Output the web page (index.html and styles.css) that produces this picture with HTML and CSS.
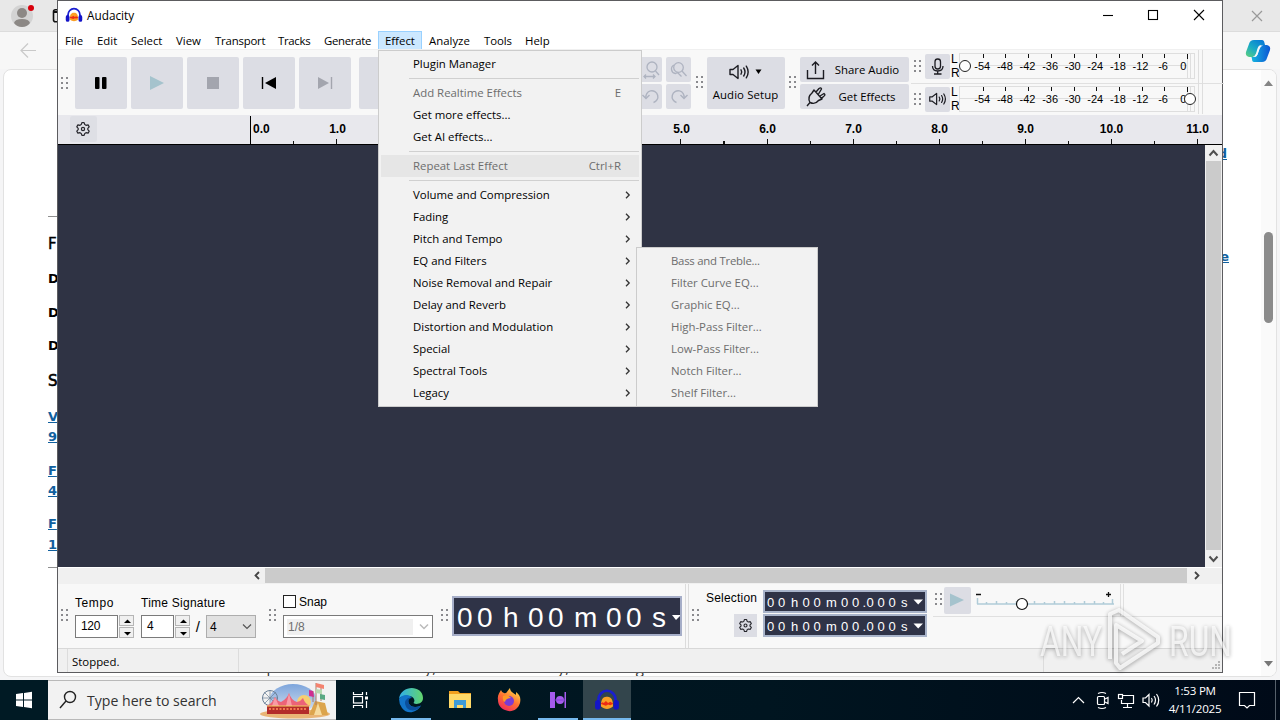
FILE: index.html
```html
<!DOCTYPE html>
<html lang="en">
<head>
<meta charset="utf-8">
<title>Audacity</title>
<link rel="stylesheet" href="styles.css">
</head>
<body>
<svg class="defs" width="0" height="0">
  <symbol id="grip" viewBox="0 0 8 14"><g fill="#8a8a8e"><rect x="0" y="1" width="2" height="2"/><rect x="5" y="1" width="2" height="2"/><rect x="0" y="6" width="2" height="2"/><rect x="5" y="6" width="2" height="2"/><rect x="0" y="11" width="2" height="2"/><rect x="5" y="11" width="2" height="2"/></g></symbol>
  <symbol id="gear" viewBox="0 0 16 16"><g fill="none" stroke="#26262c" stroke-width="1.2" stroke-linejoin="round"><path d="M6.2 3.6 L6.9 1.6 H9.1 L9.8 3.6 L11 4.3 L13.1 3.9 L14.2 5.9 L12.8 7.4 V8.6 L14.2 10.1 L13.1 12.1 L11 11.7 L9.8 12.4 L9.1 14.4 H6.9 L6.2 12.4 L5 11.7 L2.9 12.1 L1.8 10.1 L3.2 8.6 V7.4 L1.8 5.9 L2.9 3.9 L5 4.3 Z"/><circle cx="8" cy="8" r="1.6"/></g></symbol>
  <symbol id="speaker" viewBox="0 0 22 18"><g fill="none" stroke="#1c1c22" stroke-width="1.4" stroke-linecap="round" stroke-linejoin="round"><path d="M2 6.5 H5 L10 2.5 V15.5 L5 11.5 H2 Z"/><path d="M13 6.8 Q14.5 9 13 11.2"/><path d="M15.7 5 Q18.3 9 15.7 13"/><path d="M18.3 3.2 Q22 9 18.3 14.8"/></g></symbol>
  <symbol id="chev" viewBox="0 0 8 10"><path d="M2 1.8 L5.2 5 L2 8.2" fill="none" stroke="#333" stroke-width="1.3"/></symbol>
  <symbol id="phones" viewBox="0 0 24 24"><path d="M4 16 V12 A8 8.500 0 0 1 20 12 V16" fill="none" stroke="#1a1fd0" stroke-width="2.400"/><path d="M6.500 18 C6 11 9 8.500 12 9 C15.500 8.500 18 12 17.500 18 C14 21 10 21 6.500 18Z" fill="#fba026"/><path d="M6 15.500 L8 14 L9 14.800 L11 13 L13 14.800 L15 13.500 L18 15.500 L15 16.800 L13 16.200 L11 17.200 L9 16.500Z" fill="#ee2a14"/><rect x="1" y="12" width="5" height="9" rx="2.500" fill="#1414c8"/><rect x="18" y="12" width="5" height="9" rx="2.500" fill="#1414c8"/></symbol>
</svg>

<div class="screen">
  <main class="browser">
    <div class="tabstrip">
      <svg class="avatar" width="44" height="31"><circle cx="22" cy="16" r="11" fill="#d3d3d3"/><circle cx="22" cy="13" r="5" fill="#8c8885"/><path d="M14 23 Q15 19 22 19 Q29 19 30 23 Q27 27 22 27 Q17 27 14 23Z" fill="#8c8885"/><circle cx="31" cy="8" r="3" fill="#d8000c"/></svg>
      <svg width="14" height="31"><rect x="9.500" y="9.800" width="12" height="12" rx="2" fill="none" stroke="#111" stroke-width="1.600"/><path d="M9 12h8" stroke="#111" stroke-width="2"/></svg>
      <span class="grow"></span>
      <svg width="46" height="31"><path d="M18 11 L28 21 M28 11 L18 21" stroke="#999" stroke-width="1.200"/></svg>
    </div>
    <div class="navbar">
      <svg width="50" height="38"><path d="M36 18.500 H21 M28 11.500 L21 18.500 L28 25.500" fill="none" stroke="#c9c9c9" stroke-width="1.200"/></svg>
      <span class="grow"></span>
      <svg class="copilot" width="26" height="26" viewBox="0 0 26 26"><defs><linearGradient id="cpA" x1="0" y1="1" x2=".8" y2="0"><stop offset="0" stop-color="#61d27b"/><stop offset=".5" stop-color="#1aabc5"/><stop offset="1" stop-color="#087bd6"/></linearGradient><linearGradient id="cpB"><stop offset="0" stop-color="#16b7df"/><stop offset="1" stop-color="#0b55d4"/></linearGradient></defs><path d="M9 2 H17 Q19 2 19.500 5 L20 7 H17 Q14 7 13 11 L11 17 Q10 20 7 19 H4 Q0 18 1 14 L4 6 Q5 2 9 2Z" fill="url(#cpA)"/><path d="M17 24 H9 Q7 24 7 21 L6.500 19 H9 Q12 19 13 15 L15 9 Q16 6 19 7 H22 Q26 8 25 12 L22 20 Q21 24 17 24Z" fill="url(#cpB)"/><path d="M14.500 7.500 H18 Q15.500 8 14.500 11 L12.500 16.500 Q11.500 19 9 19 H7.500 Q10 18 11 15.500 L12.500 10.500 Q13 8.500 14.500 7.500Z" fill="#f4f8fa"/></svg>
    </div>
    <div class="webpage">
      <div class="left-text">
        <i class="hr"></i><b class="l1">F</b><b class="l2">D</b><b class="l3">D</b><b class="l4">D</b><b class="l5">S</b>
        <a class="l6">V</a><a class="l7">9</a><a class="l8">F</a><a class="l9">4</a><a class="l10">F</a><a class="l11">1</a><i class="hr end"></i>
      </div>
      <div class="right-text"><a class="r1">d</a><a class="r2">e</a></div>
      <div class="web-scroll">
        <svg width="15" height="14"><path d="M3 10 L7.500 4.500 L12 10Z" fill="#858585"/></svg>
        <i class="thumb"></i><span class="grow"></span>
        <svg width="15" height="14"><path d="M3 3 L7.500 8.500 L12 3Z" fill="#777"/></svg>
      </div>
      <div class="peek">a nice powerful automatically, webcams visually, &amp; thrilling and</div>
    </div>
  </main>

  <section class="window">
    <header class="titlebar">
      <svg width="18" height="18"><use href="#phones"/></svg>
      <span class="wtitle">Audacity</span>
      <svg width="140" height="30"><g fill="none" stroke="#000" stroke-width="1.100"><path d="M21 14.500 H31"/><rect x="66.500" y="9.500" width="9" height="9"/><path d="M112 9 L122 19 M122 9 L112 19"/></g></svg>
    </header>
    <nav class="menubar">
      <span class="w32">File</span><span class="w34">Edit</span><span class="w45">Select</span><span class="w39">View</span><span class="w63">Transport</span><span class="w46">Tracks</span><span class="w61">Generate</span><span class="w44 active">Effect</span><span class="w55">Analyze</span><span class="w41">Tools</span><span class="w39">Help</span>
    </nav>

    <div class="toolbar">
      <div class="transport">
        <svg class="grip" width="8" height="14"><use href="#grip"/></svg>
        <div class="big"><svg width="52" height="52"><rect x="20" y="20" width="4.500" height="12" rx="1"/><rect x="27" y="20" width="4.500" height="12" rx="1"/></svg></div>
        <div class="big"><svg width="52" height="52"><path d="M19 19 L33 26 L19 33Z" fill="#a5c3cd"/></svg></div>
        <div class="big"><svg width="52" height="52"><rect x="20" y="20" width="12" height="12" fill="#a3a5ae"/></svg></div>
        <div class="big"><svg width="52" height="52"><path d="M33 20 V32 L22 26Z"/><path d="M19.500 20 V32" stroke="#000" stroke-width="1.400"/></svg></div>
        <div class="big"><svg width="52" height="52"><path d="M19 20 V32 L30 26Z" fill="#a3a5ae"/><path d="M32.500 20 V32" stroke="#a3a5ae" stroke-width="1.400"/></svg></div>
        <div class="big sixth"></div>
      </div>
      <div class="edit-tools">
        <div class="small"><svg width="25" height="25"><g fill="none" stroke="#aeb3c0" stroke-width="1.300"><circle cx="15" cy="10" r="5"/><path d="M18.500 14 L22 18 M7 19.500 H18 M9 17.500 L7 19.500 L9 21.500 M16 17.500 L18 19.500 L16 21.500"/></g></svg></div>
        <div class="small"><svg width="25" height="25"><g fill="none" stroke="#aeb3c0" stroke-width="1.300"><circle cx="12.500" cy="10.500" r="4.800"/><path d="M16 14 L20.500 19 M8 8 A4.500 4.500 0 0 0 9.500 16.500 L11.500 15.500 L15.500 19.500"/></g></svg></div>
        <div class="small"><svg width="25" height="25"><g fill="none" stroke="#aeb3c0" stroke-width="1.400"><path d="M9 14 A6 6 0 1 1 16.500 18.500"/><path d="M5.500 11 L9 14.500 L12.500 11"/></g></svg></div>
        <div class="small"><svg width="25" height="25"><g fill="none" stroke="#aeb3c0" stroke-width="1.400"><path d="M18 14 A6 6 0 1 0 10.500 18.500"/><path d="M14.500 11 L18 14.500 L21.500 11"/></g></svg></div>
      </div>
      <svg class="grip g1" width="8" height="14"><use href="#grip"/></svg>
      <div class="setup">
        <div><svg width="22" height="18"><use href="#speaker"/></svg><svg width="8" height="8"><path d="M.5 1.500 H6.500 L3.500 6Z"/></svg></div>
        <span>Audio Setup</span>
      </div>
      <svg class="grip g2" width="8" height="14"><use href="#grip"/></svg>
      <div class="share">
        <div><svg width="22" height="22"><path d="M2.500 11 V19.500 H18.500 V11 M10.500 15 V3 M7 6.500 L10.500 3 L14 6.500" fill="none" stroke="#1c1c22" stroke-width="1.400"/></svg><span>Share Audio</span></div>
        <div><svg width="22" height="22"><path d="M2 20 L5 16.500 M5 16.500 Q2 11 7 7 L9 4 L17 13 L13.500 14.500 Q10 19 5 16.500 M11 6 L14 2.500 Q16 1 16.500 3 L13.500 8 M15 10 L19 7.500 Q21 9 18.500 10.500 L16 13" fill="none" stroke="#1c1c22" stroke-width="1.400" stroke-linejoin="round"/></svg><span>Get Effects</span></div>
      </div>
      <div class="meters">
        <div class="meter-row">
          <svg class="grip" width="8" height="14"><use href="#grip"/></svg>
          <div class="mbtn"><svg width="25" height="25"><g fill="none" stroke="#1c1c22" stroke-width="1.300"><rect x="10" y="5" width="5.500" height="10" rx="2.700"/><path d="M7.500 12 Q7.500 17 12.700 17 Q18 17 18 12 M12.700 17 V20 M9 20 H16.500"/></g></svg></div>
          <div class="lr"><span>L</span><span>R</span></div>
          <div class="meter"><svg class="mticks" width="236" height="26"><g fill="none" stroke="#dedede"><rect x=".5" y=".5" width="235" height="25"/><path d="M24 12.500 H228 M228.500 0 V26 M231.500 0V26"/></g><path d="M24.500 1v4M46.500 1v4M69.500 1v4M92.500 1v4M115.500 1v4M137.500 1v4M160.500 1v4M183.500 1v4M205.500 1v4M228.500 1v5" stroke="#111"/></svg>
            <div class="nums"><span>-54</span><span>-48</span><span>-42</span><span>-36</span><span>-30</span><span>-24</span><span>-18</span><span>-12</span><span>-6</span><span class="zero">0</span></div><i class="knob k1"></i></div>
        </div>
        <div class="meter-row second">
          <svg class="grip" width="8" height="14"><use href="#grip"/></svg>
          <div class="mbtn"><svg width="19" height="16"><use href="#speaker"/></svg></div>
          <div class="lr"><span>L</span><span>R</span></div>
          <div class="meter"><svg class="mticks" width="236" height="26"><g fill="none" stroke="#dedede"><rect x=".5" y=".5" width="235" height="25"/><path d="M0 12.500 H228 M228.500 0 V26 M231.500 0V26"/></g><path d="M24.500 1v4M46.500 1v4M69.500 1v4M92.500 1v4M115.500 1v4M137.500 1v4M160.500 1v4M183.500 1v4M205.500 1v4M228.500 1v5" stroke="#111"/></svg>
            <div class="nums"><span>-54</span><span>-48</span><span>-42</span><span>-36</span><span>-30</span><span>-24</span><span>-18</span><span>-12</span><span>-6</span><span class="zero">0</span></div><i class="knob k2"></i></div>
        </div>
      </div>
      <i class="vline"></i>
    </div>

    <div class="ruler">
      <div class="rgear"><svg width="16" height="16"><use href="#gear"/></svg></div>
      <div class="rzero">0.0</div>
      <div class="rlabels"><span>1.0</span><span></span><span></span><span></span><span>5.0</span><span>6.0</span><span>7.0</span><span>8.0</span><span>9.0</span><span>10.0</span><span>11.0</span></div>
    </div>

    <div class="work">
      <div class="canvas"></div>
      <div class="vscroll"><svg width="17" height="16"><path d="M4.500 10.500 L8.500 6 L12.500 10.500" fill="none" stroke="#505050" stroke-width="2"/></svg><i></i><svg width="17" height="17"><path d="M4.500 6.500 L8.500 11 L12.500 6.500" fill="none" stroke="#505050" stroke-width="2"/></svg></div>
    </div>
    <div class="hscroll"><svg width="16" height="17"><path d="M10 4 L6.500 7.500 L10 11" fill="none" stroke="#444" stroke-width="1.800"/></svg><i></i><svg width="18" height="17"><path d="M8 4 L11.500 7.500 L8 11" fill="none" stroke="#444" stroke-width="1.800"/></svg></div>

    <div class="bottom">
      <svg class="grip b1" width="8" height="14"><use href="#grip"/></svg>
      <div class="tempo">
        <label>Tempo</label>
        <div class="row"><span class="field f43">120</span><span class="spin"><svg width="15" height="11"><path d="M4 7 L7.500 3.500 L11 7Z"/></svg><svg width="15" height="11"><path d="M4 4 L7.500 7.500 L11 4Z"/></svg></span></div>
      </div>
      <div class="tsig">
        <label>Time Signature</label>
        <div class="row"><span class="field f33">4</span><span class="spin"><svg width="15" height="11"><path d="M4 7 L7.500 3.500 L11 7Z"/></svg><svg width="15" height="11"><path d="M4 4 L7.500 7.500 L11 4Z"/></svg></span><span class="slash">/</span><span class="combo">4<svg width="10" height="8"><path d="M1 1.500 L5 5.500 L9 1.500" fill="none" stroke="#555" stroke-width="1.200"/></svg></span></div>
      </div>
      <svg class="grip b2" width="8" height="14"><use href="#grip"/></svg>
      <div class="snap">
        <div class="chk"><i></i><label>Snap</label></div>
        <div class="snapcombo"><span>1/8</span><svg width="10" height="8"><path d="M1 1.500 L5 5.500 L9 1.500" fill="none" stroke="#bbb" stroke-width="1.500"/></svg></div>
      </div>
      <svg class="grip b3" width="8" height="14"><use href="#grip"/></svg>
      <svg class="bigtime" width="230" height="40"><rect x="1" y="1" width="228" height="38" fill="#2f3347" stroke="#a6aec8" stroke-width="2"/><text y="31" x="5 25 40 51 67 76 96 111 122 145 154 174 189 200">00 h 00 m 00 s</text><path d="M220 19 H228 V20 L224 24Z" fill="#fff"/></svg>
      <i class="vline2"></i>
      <svg class="grip b4" width="8" height="14"><use href="#grip"/></svg>
      <div class="selection"><label>Selection</label><div class="sgear"><svg width="15" height="15"><use href="#gear"/></svg></div></div>
      <div class="fields">
        <svg class="smalltime" width="164" height="23"><rect x="1" y="1" width="162" height="21" fill="#2f3347" stroke="#a9b4ca" stroke-width="2"/><text y="17" x="4 15 23 28 35 39.500 50.500 58 63 74 78 89 99.500 103.500 114.500 125.500 133 138">00 h 00 m 00.000 s</text><path d="M150.500 9.500 H160 L155.200 14.500Z" fill="#fff"/></svg>
        <svg class="smalltime" width="164" height="23"><rect x="1" y="1" width="162" height="21" fill="#2f3347" stroke="#a9b4ca" stroke-width="2"/><text y="17" x="4 15 23 28 35 39.500 50.500 58 63 74 78 89 99.500 103.500 114.500 125.500 133 138">00 h 00 m 00.000 s</text><path d="M150.500 9.500 H160 L155.200 14.500Z" fill="#fff"/></svg>
      </div>
      <div class="speed">
        <div class="speed-row">
          <svg class="grip" width="8" height="14"><use href="#grip"/></svg>
          <div class="pbtn"><svg width="27" height="27"><path d="M6 6.500 L20 13 L6 19.500Z" fill="#a5c3cd"/></svg></div>
          <svg class="slider" width="146" height="28"><path d="M1 18 H138 M1.500 12 V18 M10.500 16V18M20.500 15V18M30.500 16V18M40.500 15V18M58.500 15V18M68.500 16V18M78.500 15V18M88.500 15V18M98.500 16V18M108.500 15V18M118.500 15V18M127.500 16V18M136.500 13V18" stroke="#b0ccd8" fill="none" stroke-width="1.500"/><path d="M0 8.500 H5 M130 8.500 H135 M132.500 6 V11" stroke="#111" stroke-width="1.300"/><circle cx="46" cy="18" r="5.500" fill="#fff" stroke="#111" stroke-width="1.200"/></svg>
          <i class="vline3"></i>
        </div>
      </div>
    </div>
    <footer class="status"><span class="s0"></span><span class="s1">Stopped.</span><span class="s2"></span><span class="s3"><svg width="12" height="12"><g fill="#b5b5b5"><rect x="8" y="1" width="2" height="2"/><rect x="5" y="4" width="2" height="2"/><rect x="8" y="4" width="2" height="2"/><rect x="2" y="7" width="2" height="2"/><rect x="5" y="7" width="2" height="2"/><rect x="8" y="7" width="2" height="2"/></g></svg></span></footer>
  </section>

  <div class="menu effect-menu">
    <div class="item">Plugin Manager</div>
    <hr>
    <div class="item off">Add Realtime Effects<em>E</em></div>
    <div class="item">Get more effects...</div>
    <div class="item">Get AI effects...</div>
    <hr>
    <div class="item off hover">Repeat Last Effect<em>Ctrl+R</em></div>
    <hr>
    <div class="item">Volume and Compression<svg width="8" height="10"><use href="#chev"/></svg></div>
    <div class="item">Fading<svg width="8" height="10"><use href="#chev"/></svg></div>
    <div class="item">Pitch and Tempo<svg width="8" height="10"><use href="#chev"/></svg></div>
    <div class="item">EQ and Filters<svg width="8" height="10"><use href="#chev"/></svg></div>
    <div class="item">Noise Removal and Repair<svg width="8" height="10"><use href="#chev"/></svg></div>
    <div class="item">Delay and Reverb<svg width="8" height="10"><use href="#chev"/></svg></div>
    <div class="item">Distortion and Modulation<svg width="8" height="10"><use href="#chev"/></svg></div>
    <div class="item">Special<svg width="8" height="10"><use href="#chev"/></svg></div>
    <div class="item">Spectral Tools<svg width="8" height="10"><use href="#chev"/></svg></div>
    <div class="item">Legacy<svg width="8" height="10"><use href="#chev"/></svg></div>
  </div>
  <div class="menu sub-menu">
    <div class="item off">Bass and Treble...</div>
    <div class="item off">Filter Curve EQ...</div>
    <div class="item off">Graphic EQ...</div>
    <div class="item off">High-Pass Filter...</div>
    <div class="item off">Low-Pass Filter...</div>
    <div class="item off">Notch Filter...</div>
    <div class="item off">Shelf Filter...</div>
  </div>

  <svg class="watermark" width="210" height="72" viewBox="0 0 210 72"><text x="4" y="51" textLength="62" lengthAdjust="spacingAndGlyphs">ANY</text><text x="133" y="51" textLength="63" lengthAdjust="spacingAndGlyphs">RUN</text><g fill="none" stroke-linejoin="round"><path d="M74 54 V9 L83 5 L122 32 V38 L84 63 L80 58 V20 L106 36 L86 49"/></g></svg>

  <footer class="taskbar">
    <div class="start"><svg width="48" height="40"><path d="M16 14 L23 13 V19.500 H16Z M24 12.900 L32 11.800 V19.500 H24Z M16 20.500 H23 V27 L16 26Z M24 20.500 H32 V28.200 L24 27.100Z" fill="#fff"/></svg></div>
    <div class="search"><svg width="38" height="38"><g fill="none" stroke="#222" stroke-width="1.400"><circle cx="22" cy="16" r="5.500"/><path d="M18 20 L12 27"/></g></svg><span>Type here to search</span>
      <svg class="fair" width="74" height="38"><defs><linearGradient id="sky" x1="0" y1="0" x2="0" y2="1"><stop offset="0" stop-color="#7da5dc"/><stop offset="1" stop-color="#d9e3ef"/></linearGradient></defs><ellipse cx="33" cy="18" rx="23" ry="15" fill="url(#sky)"/><circle cx="44" cy="21" r="7" fill="#f7cf70"/><ellipse cx="35" cy="33" rx="35" ry="4.500" fill="#e9b576"/><g fill="none" stroke="#6a7f96"><circle cx="10" cy="17" r="7.500"/><path d="M10 9V29M2 17H18M4 11L16 23M16 11L4 23" stroke-width=".7"/></g><path d="M6 25 Q12 23 15 16 Q17 20 21 21 Q27 18 29 12 Q31 19 37 21 Q41 20 43 17 Q45 23 50 25Z" fill="#ec6378"/><path d="M29 12 L26 25 H32Z M15 16 L12 25 H19Z" fill="#f89aa6"/><rect x="7" y="25" width="42" height="8" fill="#b32c2a"/><path d="M9 28H47" stroke="#f47a50" stroke-width="2" stroke-dasharray="2 1.500"/><path d="M7 25H49" stroke="#f2cf62"/><path d="M49 34 L55 20 L65 22 L68 34Z" fill="#dca44c"/><path d="M54 34 L58 22 L62 34Z" fill="#f6db9f"/><path d="M56 24V2M61 20V7M53 21V10" stroke="#a87d69" fill="none"/><path d="M56 2L64 4V8L56 6Z" fill="#f4836f"/><path d="M53 10L49 9V15L54 16Z" fill="#cf2e91"/><path d="M56 8L62 9V13L56 12Z" fill="#b6d9b0"/><path d="M60 13L65 14V19L60 18Z" fill="#5aa983"/></svg>
    </div>
    <div class="task first"><svg width="24" height="24"><g fill="none" stroke="#fff" stroke-width="1.200"><path d="M4.500 4V6.500H13.500V4M4.500 20V17.500H13.500V20"/><rect x="4.500" y="8.500" width="9" height="6.500"/><path d="M17.500 4V7M17.500 13V20"/></g><rect x="16" y="8.500" width="3" height="3" fill="#fff"/></svg></div>
    <div class="task run"><svg width="26" height="26" viewBox="0 0 26 26"><defs><linearGradient id="ed" x1="0" x2="1"><stop offset="0" stop-color="#2faeea"/><stop offset="1" stop-color="#63d66c"/></linearGradient></defs><path d="M1 12 C3 -3 25 -2 25 11 C25 17 18 18 15.500 16 C18 13 15 9 11 9 C6 8 2 10 1 12Z" fill="url(#ed)"/><path d="M1 12 C4 7 12 7 14 11 C10 10 9 15 12 18 C15 21 20 20 23 18.500 C18 27 8 27 4 21 Q1 17 1 12Z" fill="#1274c9"/><path d="M7 16 C7 12 11 10 14 11 C10 11 9 16 13 19 C16 21 21 20 23 18.500 C20 25 8 26 7 16Z" fill="#0b4f9c"/></svg></div>
    <div class="task"><svg width="24" height="24"><path d="M1 3H10L12 5H23V20H1Z" fill="#f2a01e"/><path d="M1 6H23V20H1Z" fill="#ffd968"/><path d="M6 12H18V20H15V17H9V20H6Z" fill="#3e9ad6"/></svg></div>
    <div class="task"><svg width="26" height="26" viewBox="0 0 26 26"><defs><linearGradient id="ff" x1=".8" y1="0" x2=".2" y2="1"><stop offset="0" stop-color="#ffe14a"/><stop offset=".5" stop-color="#ff7131"/><stop offset="1" stop-color="#ee2461"/></linearGradient></defs><path d="M2 13 C1 8 4 5 5 3 Q6 6 8 6 C11 7 11 4 14 1 C14 5 18 6 20 8 L20 5 C24 8 25 11 24 16 C22 23 15 26 9 23 C4 21 2 17 2 13Z" fill="url(#ff)"/><circle cx="13" cy="14" r="5" fill="#7b3bd3"/><path d="M7 9 Q12 7 15 11 Q10 11 9 15 Q6 14 7 9Z" fill="#ff9a27"/></svg></div>
    <div class="task run"><svg width="24" height="24"><path d="M4 4H9V20H4Z M18.500 4H20V20H18.500Z" fill="#a45bee"/><circle cx="14" cy="12" r="4" fill="#a45bee"/><path d="M8 11.500H19V12.500H8Z" fill="#8440d8"/></svg></div>
    <div class="task run current"><svg width="26" height="26"><use href="#phones"/></svg></div>
    <span class="grow"></span>
    <svg class="tray" width="98" height="40"><g fill="none" stroke="#fff" stroke-width="1.200"><path d="M6 23 L11.500 17.500 L17 23"/><rect x="30.500" y="16.500" width="7" height="8" rx="1"/><path d="M38 19 L41 17.500 V23.500 L38 22 M31 13.500 Q35 11.500 39 13.500 M31 27.500 Q35 29.500 39 27.500"/><path d="M56 15.500H66.500V23.500H54.500V20M60.500 24V27M56 27.500H65"/><rect x="51.500" y="14.500" width="4" height="4"/><path d="M76 18H78.500L82 14.500V26L78.500 22.500H76ZM84.500 18Q86 20 84.500 22.500M87 16Q90 20 87 24.500M89.500 14Q94 20 89.500 26.500"/></g></svg>
    <div class="clock"><span>1:53 PM</span><span>4/11/2025</span></div>
    <svg width="55" height="40"><path d="M14.500 12.500H29.500V25.500H24.500L22 28L19.500 25.500H14.500Z" fill="none" stroke="#fff" stroke-width="1.200"/><path d="M50.500 0V40" stroke="#56606b"/></svg>
  </footer>
</div>
</body>
</html>
```

FILE: styles.css
```css
* { box-sizing: border-box; }
body { margin: 0; font-family: "Open Sans", "Noto Sans", sans-serif; font-size: 11.4px; color: #000; }
svg { display: block; flex: none; }
.defs { position: absolute; }
i { font-style: normal; }
.grow { flex: 1; }
.screen { position: relative; width: 1280px; height: 720px; overflow: hidden; background: #f7f7f7; display: flex; flex-direction: column; }

/* Browser behind the editor window */
.browser { height: 680px; display: flex; flex-direction: column; background: #f5f5f6; }
.tabstrip { height: 32px; display: flex; background: #e8e8e8; border-bottom: 1px solid #dcdcdc; }
.navbar { height: 37px; display: flex; background: #f7f7f7; }
.copilot { margin: 6px 9px 0 0; }
.webpage { position: relative; margin: 0 3px; height: 608px; background: #fff; border: 1px solid #e2e2e2; border-radius: 8px; display: flex; justify-content: space-between; overflow: hidden; }
.left-text { width: 60px; padding: 146px 0 0 44px; display: flex; flex-direction: column; font-family: "DejaVu Sans", sans-serif; line-height: 20px; }
.left-text .hr { height: 1px; flex: none; background: #8f8f8f; }
.left-text b { font-size: 13px; font-weight: bold; height: 20px; }
.left-text a, .right-text a { color: #10609e; font-size: 13px; font-weight: bold; text-decoration: underline; height: 20px; }
.left-text .l1 { margin-top: 17px; font-weight: normal; font-size: 15px; -webkit-text-stroke: .4px; }
.l2 { margin-top: 15px; }
.l3 { margin-top: 14px; }
.l4 { margin-top: 13px; }
.left-text .l5 { margin-top: 15px; font-size: 15px; font-weight: normal; -webkit-text-stroke: .6px; }
.l6 { margin-top: 16px; }
.l8 { margin-top: 14px; }
.l10 { margin-top: 13px; }
.l11 { margin-top: 1px; }
.left-text .end { margin-top: 12px; }
.right-text { flex: 1; display: flex; flex-direction: column; align-items: flex-end; padding: 74px 32px 0 0; font-family: "DejaVu Sans", sans-serif; line-height: 20px; }
.right-text .r1 { margin-right: 2px; }
.right-text .r2 { margin-top: 83px; }
.web-scroll { width: 15px; background: #fafafa; display: flex; flex-direction: column; padding: 6px 0 4px; }
.thumb { width: 9px; height: 91px; margin: 142px 0 0 3px; border-radius: 5px; background: #8b8b8b; }
.peek { position: absolute; left: 216px; top: 587px; line-height: 20px; font-size: 15px; letter-spacing: .25px; width: 480px; white-space: nowrap; color: #333; }

/* Editor window */
.window { position: absolute; left: 57px; top: 0; width: 1166px; height: 673px; border: 1px solid #5c5c5f; background: #f8f8f8; display: flex; flex-direction: column; }
.titlebar { height: 30px; background: #fff; display: flex; align-items: center; padding-left: 7px; }
.titlebar > svg:first-child { margin-bottom: 2px; }
.wtitle { flex: 1; font-size: 11.8px; padding: 0 0 2px 4px; }
.menubar { height: 19px; background: #fff; display: flex; line-height: 19px; font-size: 11.4px; }
.menubar span { padding-left: 7px; white-space: nowrap; }
.w32 { width: 32px; } .w34 { width: 34px; } .w45 { width: 45px; } .w39 { width: 39px; } .w63 { width: 63px; letter-spacing: -.2px; } .w46 { width: 46px; letter-spacing: -.3px; } .w61 { width: 61px; letter-spacing: -.3px; } .w44 { width: 44px; } .w55 { width: 55px; } .w41 { width: 41px; letter-spacing: -.1px; }
.menubar .active { background: #cce8ff; border: 1px solid #99d1ff; padding-left: 6px; line-height: 17px; }

.toolbar { height: 65px; display: flex; align-items: flex-start; border-top: 1px solid #f0f0f0; margin-top: -1px; height: 66px; padding-top: 0; }
.transport { display: flex; align-items: center; gap: 4px; padding: 7px 0 0 3px; width: 579px; }
.transport .grip { margin-right: 2px; }
.big { width: 52px; height: 52px; background: #dcdde4; border-radius: 2px; }
.sixth { margin-left: 4px; }
.edit-tools { display: grid; grid-template-columns: 25px 25px; gap: 2px 4px; padding-top: 7px; width: 59px; }
.small { width: 25px; height: 25px; background: #dcdde4; border-radius: 2px; }
.setup { margin-top: 7px; width: 78px; height: 52px; background: #dcdde4; border-radius: 2px; display: flex; flex-direction: column; align-items: center; line-height: 18px; white-space: nowrap; padding-top: 6px; }
.setup div { display: flex; align-items: center; gap: 5px; height: 18px; margin-left: -1px; }
.setup span { margin-top: 5px; margin-left: -1px; letter-spacing: .1px; }
.g1 { margin: 25px 2px 0 -1px; width: 10px; }
.g2 { margin: 25px 7px 0 4px; }
.share { width: 109px; margin-top: 7px; display: flex; flex-direction: column; gap: 2px; margin-left: -4px; }
.share div { height: 25px; background: #dcdde4; border-radius: 2px; display: flex; align-items: center; padding-left: 5px; }
.share span { flex: 1; text-align: center; padding-right: 2px; }
.meters { flex: none; width: 287px; margin-left: 2px; }
.meter-row { height: 34px; display: flex; align-items: center; padding: 0 0 1px 3px; border-bottom: 1px solid #e0e0e0; margin-right: -26px; }
.meter-row.second { height: 31px; border: 0; padding: 0 0 1px 3px; }
.mbtn { width: 25px; height: 25px; background: #dcdde4; border-radius: 2px; margin-left: 3px; display: flex; align-items: center; justify-content: center; }
.lr { width: 9px; display: flex; flex-direction: column; font: 12px/14px "Liberation Sans", sans-serif; padding-left: 1px; }
.meter { position: relative; width: 236px; height: 26px; }
.mticks { position: absolute; left: 0; top: 0; }
.nums { position: relative; display: flex; padding: 6px 0 0 12px; font: 11px/14px "Liberation Sans", sans-serif; }
.nums span { width: 22.6px; text-align: center; }
.nums .zero { width: 18px; }
.knob { position: absolute; width: 12px; height: 12px; border: 1px solid #222; border-radius: 50%; background: #fff; top: 7px; }
.k1 { left: 0; } .k2 { left: 225px; }
.vline { width: 5px; height: 64px; border: solid #dedede; border-width: 0 1px; }

.ruler { height: 30px; background: #e8e8ed; border-bottom: 1px solid #000; display: flex; font: bold 12px "Liberation Sans", sans-serif; line-height: 28px; }
.rgear { width: 27px; height: 26px; margin: 1px 0 0 12px; background: #dedfe5; border-radius: 2px; display: flex; align-items: center; justify-content: center; padding-right: 1px; }
.rzero { width: 43px; margin: 1px 0 0 153px; border-left: 1px solid #000; padding-left: 2px; line-height: 27px; }
.rlabels { display: flex; flex: 1; overflow: hidden; height: 29px; background: repeating-linear-gradient(90deg, #111 0 1px, transparent 1px 86.1px) 0 100% / 100% 3px no-repeat, repeating-linear-gradient(90deg, transparent 0 43px, #111 43px 44px, transparent 44px 86.1px) 0 100% / 100% 5px no-repeat; }
.rlabels span { width: 86px; flex: none; text-align: center; padding-left: 3px; }

.work { height: 422px; display: flex; }
.canvas { flex: 1; background: #2f3344; }
.vscroll { width: 17px; background: #f0f0f0; display: flex; flex-direction: column; }
.vscroll i { flex: 1; background: #cbcbcb; margin: 0 1px; }
.hscroll { height: 17px; background: #f0f0f0; border-top: 1px solid #fff; display: flex; padding-left: 191px; padding-right: 17px; }
.hscroll i { flex: 1; background: #cbcbcb; height: 15px; }

.bottom { height: 65px; display: flex; border-bottom: 1px solid #d8d8d8; font: 12px/14px "Liberation Sans", sans-serif; letter-spacing: .2px; }
.b1 { margin: 24px 6px 0 3px; }
.tempo { width: 66px; padding-top: 12px; }
.tsig { width: 124px; padding-top: 12px; }
.tempo label, .tsig label { display: block; height: 19px; white-space: nowrap; letter-spacing: .6px; }
.tsig label { letter-spacing: .25px; }
.row { display: flex; height: 23px; }
.field { border: 1px solid #7a7a7a; background: #fff; line-height: 21px; padding-left: 5px; letter-spacing: -.3px; }
.f43 { width: 43px; } .f33 { width: 33px; }
.spin { margin-left: 1px; width: 15px; display: flex; flex-direction: column; gap: 1px; }
.spin svg { background: #f0f0f0; border: 1px solid #b5b5b5; }
.slash { width: 16px; text-align: center; line-height: 23px; font-size: 15px; }
.combo { width: 50px; border: 1px solid #adadad; background: #e1e1e1; display: flex; align-items: center; justify-content: space-between; padding: 0 3px; }
.b2 { margin: 24px 6px 0 4px; }
.snap { width: 150px; padding-top: 11px; }
.chk { display: flex; align-items: center; height: 13px; gap: 3px; letter-spacing: 0; }
.chk i { width: 13px; height: 13px; border: 1px solid #222; background: #fff; }
.snapcombo { margin-top: 7px; height: 23px; border: 1px solid #7a7a7a; background: #fff; display: flex; align-items: center; justify-content: space-between; padding: 0 3px 0 3px; color: #6d6d6d; letter-spacing: 0; }
.snapcombo span { background: #f0f0f0; width: 126px; line-height: 16px; padding-left: 1px; }
.b3 { margin: 24px 4px 0 8px; }
.bigtime { margin-top: 12px; margin-left: -1px; }
.bigtime text { font: 28px "Liberation Sans", sans-serif; fill: #fff; letter-spacing: 0; white-space: pre; }
.vline2 { width: 4px; margin-left: 3px; border: solid #dcdcdc; border-width: 0 1px; }
.b4 { margin: 24px 0 0 3px; }
.selection { width: 63px; padding: 7px 0 0 6px; display: flex; flex-direction: column; }
.selection label { letter-spacing: .2px; }
.sgear { width: 23px; height: 23px; background: #dcdde4; display: flex; align-items: center; justify-content: center; margin: 9px 0 0 28px; }
.fields { display: flex; flex-direction: column; gap: 1px; padding-top: 6px; }
.smalltime text { font: 13px "Liberation Sans", sans-serif; fill: #fff; letter-spacing: 0; }
.speed { flex: 1; padding-left: 6px; }
.speed-row { height: 33px; display: flex; border-bottom: 1px solid #e0e0e0; }
.speed-row .grip { margin: 8px 0 0 2px; }
.pbtn { width: 27px; height: 27px; margin: 3px 5px 0 1px; background: #dcdde4; border-radius: 2px; }
.slider { margin-top: 2px; }
.vline3 { width: 4px; border: solid #e0e0e0; border-width: 0 1px; margin-left: -2px; }
.status { height: 23px; background: #f0f0f0; display: flex; line-height: 25px; font-size: 11.4px; }
.status span { border-right: 1px solid #dcdcdc; }
.s0 { width: 10px; } .s1 { width: 171px; padding-left: 4px; } .s2 { width: 805px; }
.status .s3 { flex: 1; display: flex; justify-content: flex-end; align-items: flex-end; border: 0; padding: 0; }

/* Menus */
.menu { position: absolute; background: #f2f2f2; border: 1px solid #cccccc; padding: 2px; font-size: 11.4px; }
.effect-menu { left: 378px; top: 50px; width: 264px; height: 357px; }
.sub-menu { left: 636px; top: 247px; width: 182px; height: 160px; }
.sub-menu .item:first-child { letter-spacing: -.25px; }
.item { height: 22px; padding: 0 7px 2px 32px; display: flex; align-items: center; justify-content: space-between; white-space: nowrap; }
.item svg { margin-top: 1px; }
.item em { font-style: normal; padding-right: 11px; }
.off { color: #6d6d6d; }
.hover { background: #e6e6e6; }
.menu hr { margin: 3px 0 3px 28px; border: 0; height: 1px; background: #d0d0d0; }

.watermark { position: absolute; left: 1036px; top: 605px; opacity: .85; filter: drop-shadow(0 1px 2px rgba(0, 0, 0, .5)); }
.watermark text { font: 42px "Roboto", sans-serif; fill: #fff; fill-opacity: .75; }
.watermark path { stroke: #fff; stroke-opacity: .8; stroke-width: 4; }

/* Taskbar */
.taskbar { height: 40px; display: flex; background: linear-gradient(90deg, #001a24, #001520 60%, #000a18); }
.start { width: 48px; background: #001a24; }
.search { width: 288px; border: 1px solid #b9b9b9; border-width: 1px 0; background: #f2f2f2; display: flex; align-items: center; font-size: 14.1px; color: #333; }
.search span { width: 174px; padding-left: 1px; white-space: nowrap; }
.task { width: 49px; display: flex; align-items: center; justify-content: center; position: relative; }
.task.first { width: 50px; padding-right: 1px; }
.task.run::after { content: ""; position: absolute; left: 5px; right: 4px; bottom: 0; height: 2px; background: #76b9ed; }
.task.current { background: #33454c; width: 48px; margin-left: 1px; }
.task.current::after { left: 0; right: 0; }
.clock { width: 60px; color: #fff; display: flex; flex-direction: column; align-items: center; line-height: 18px; padding-top: 2px; font-size: 11.6px; letter-spacing: -.25px; }
```
